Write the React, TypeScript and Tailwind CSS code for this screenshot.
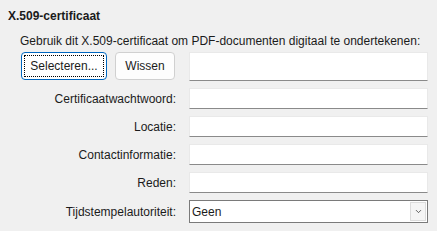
import { ChevronDown } from "lucide-react";

function Field() {
    return <div className="h-[21px] bg-white border border-[#e9e9e9] border-b-[#8a8a8a]" />;
}

const rows = ["Certificaatwachtwoord:", "Locatie:", "Contactinformatie:", "Reden:"];

export default function App() {
    return (
        <div className="w-[437px] h-[231px] bg-[#f0f0f0] text-[12px] text-[#1b1b1b] leading-[16px] whitespace-nowrap font-['Liberation_Sans',Arial,sans-serif]">
            <div className="pt-[8px] pl-[8px] font-bold">X.509-certificaat</div>
            <div className="pl-[20px] mt-[9px]">Gebruik dit X.509-certificaat om PDF-documenten digitaal te ondertekenen:</div>

            <div className="mt-[3px] grid grid-cols-[176px_239px] gap-x-[13px] gap-y-[7px] items-center">
                <div className="flex gap-[8px] pl-[21px] h-[29px] items-start">
                    <button className="w-[86px] h-[28px] bg-white border border-[#0067c0] rounded-[4px] flex items-center justify-center p-[2px]">
                        <span className="w-full h-full border border-dotted border-black flex items-center justify-center">Selecteren...</span>
                    </button>
                    <button className="w-[60px] h-[28px] bg-[#fdfdfd] border border-[#d0d0d0] rounded-[4px]">Wissen</button>
                </div>
                <div className="h-[29px] bg-white border border-[#e9e9e9] border-b-[#8a8a8a]" />

                {rows.map((r) => (
                    <div key={r} className="contents">
                        <div className="text-right">{r}</div>
                        <Field />
                    </div>
                ))}

                <div className="text-right">Tijdstempelautoriteit:</div>
                <div className="h-[23px] bg-white border border-[#7a7a7a] flex items-center justify-between pl-[2px] pr-[1px]">
                    <span>Geen</span>
                    <span className="w-[16px] h-[19px] bg-[#f5f5f5] border border-[#dcdcdc] flex items-center justify-center">
                        <ChevronDown className="w-[9px] h-[9px] text-[#333]" strokeWidth={2} />
                    </span>
                </div>
            </div>
        </div>
    );
}
